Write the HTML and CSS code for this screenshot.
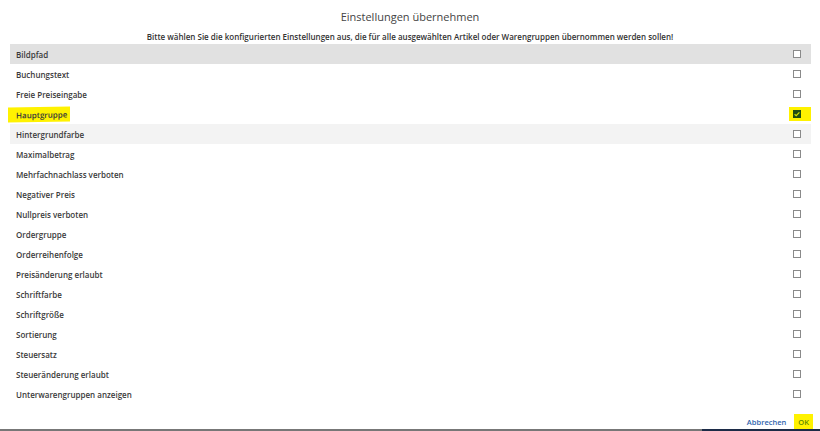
FILE: index.html
```html
<!DOCTYPE html>
<html lang="de">
<head>
<meta charset="utf-8">
<title>Einstellungen übernehmen</title>
<link rel="stylesheet" href="styles.css">
</head>
<body>
<div class="dialog">
  <h1 class="title">Einstellungen übernehmen</h1>
  <p class="subtitle">Bitte wählen Sie die konfigurierten Einstellungen aus, die für alle ausgewählten Artikel oder Warengruppen übernommen werden sollen!</p>
  <ul class="list">
    <li class="row row-selected"><span class="label">Bildpfad</span><span class="cb"></span></li>
    <li class="row"><span class="label">Buchungstext</span><span class="cb"></span></li>
    <li class="row"><span class="label">Freie Preiseingabe</span><span class="cb"></span></li>
    <li class="row"><span class="label mark">Hauptgruppe</span><span class="cb-wrap"><span class="cb cb-checked"><svg viewBox="0 0 8 8" width="8" height="8"><path d="M1.6 4.2 L3.2 5.7 L6.4 2.3" fill="none" stroke="#d6e400" stroke-width="1.2"/></svg></span></span></li>
    <li class="row row-hover"><span class="label">Hintergrundfarbe</span><span class="cb"></span></li>
    <li class="row"><span class="label">Maximalbetrag</span><span class="cb"></span></li>
    <li class="row"><span class="label">Mehrfachnachlass verboten</span><span class="cb"></span></li>
    <li class="row"><span class="label">Negativer Preis</span><span class="cb"></span></li>
    <li class="row"><span class="label">Nullpreis verboten</span><span class="cb"></span></li>
    <li class="row"><span class="label">Ordergruppe</span><span class="cb"></span></li>
    <li class="row"><span class="label">Orderreihenfolge</span><span class="cb"></span></li>
    <li class="row"><span class="label">Preisänderung erlaubt</span><span class="cb"></span></li>
    <li class="row"><span class="label">Schriftfarbe</span><span class="cb"></span></li>
    <li class="row"><span class="label">Schriftgröße</span><span class="cb"></span></li>
    <li class="row"><span class="label">Sortierung</span><span class="cb"></span></li>
    <li class="row"><span class="label">Steuersatz</span><span class="cb"></span></li>
    <li class="row"><span class="label">Steueränderung erlaubt</span><span class="cb"></span></li>
    <li class="row"><span class="label">Unterwarengruppen anzeigen</span><span class="cb"></span></li>
  </ul>
  <div class="footer">
    <button class="btn">Abbrechen</button>
    <button class="btn btn-ok">OK</button>
  </div>
</div>
<div class="taskbar"><div class="tb-left"></div><div class="tb-right"></div></div>
</body>
</html>
```
FILE: styles.css
```css
html, body {
  margin: 0;
  padding: 0;
  background: #ffffff;
}
body {
  font-family: "Open Sans", "Noto Sans", sans-serif;
  color: #333333;
  width: 820px;
  height: 431px;
  overflow: hidden;
  display: flex;
  flex-direction: column;
}
.dialog {
  flex: 1;
  display: flex;
  flex-direction: column;
}
.title {
  margin: 0;
  padding-top: 9px;
  height: 21px;
  line-height: 16px;
  font-size: 11px;
  font-weight: 400;
  text-align: center;
  color: #444444;
}
.subtitle {
  margin: 0;
  height: 14px;
  line-height: 14px;
  font-size: 8px;
  font-weight: 600;
  text-align: center;
  color: #333333;
}
.list {
  list-style: none;
  margin: 0 9px 0 10px;
  padding: 0;
}
.row {
  height: 20px;
  display: flex;
  align-items: center;
  justify-content: space-between;
  padding: 0 10px 0 6px;
  font-size: 8px;
  font-weight: 600;
  color: #3a3a3a;
}
.row-selected {
  background: #e1e1e1;
}
.row-hover {
  background: #f3f3f3;
}
.label {
  line-height: 13px;
}
.mark {
  background: #fff200;
  margin-left: -8px;
  padding: 1px 3px 1px 8px;
  transform: skewY(-1deg);
}
.cb {
  width: 6px;
  height: 6px;
  border: 1px solid #8a8a8a;
  background: #ffffff;
  display: block;
}
.cb-wrap {
  background: #fff200;
  margin-right: -10px;
  padding: 3px 10px 3px 4px;
}
.cb-checked {
  width: 8px;
  height: 8px;
  border: none;
  background: #1f4d12;
}
.cb-checked svg {
  display: block;
}
.footer {
  display: flex;
  justify-content: flex-end;
  align-items: center;
  gap: 8px;
  padding: 10px 7px 0 0;
  height: 15px;
}
.btn {
  border: none;
  background: transparent;
  font-family: "Open Sans", "Noto Sans", sans-serif;
  font-size: 7.5px;
  font-weight: 600;
  color: #2f63ad;
  padding: 0;
  line-height: 14px;
  cursor: pointer;
}
.btn-ok {
  background: #fff200;
  color: #5f8a00;
  padding: 1px 4px;
}
.taskbar {
  height: 2px;
  display: flex;
}
.tb-left {
  flex: 1;
  background: #777777;
}
.tb-right {
  width: 118px;
  background: #1c2b47;
}
```
